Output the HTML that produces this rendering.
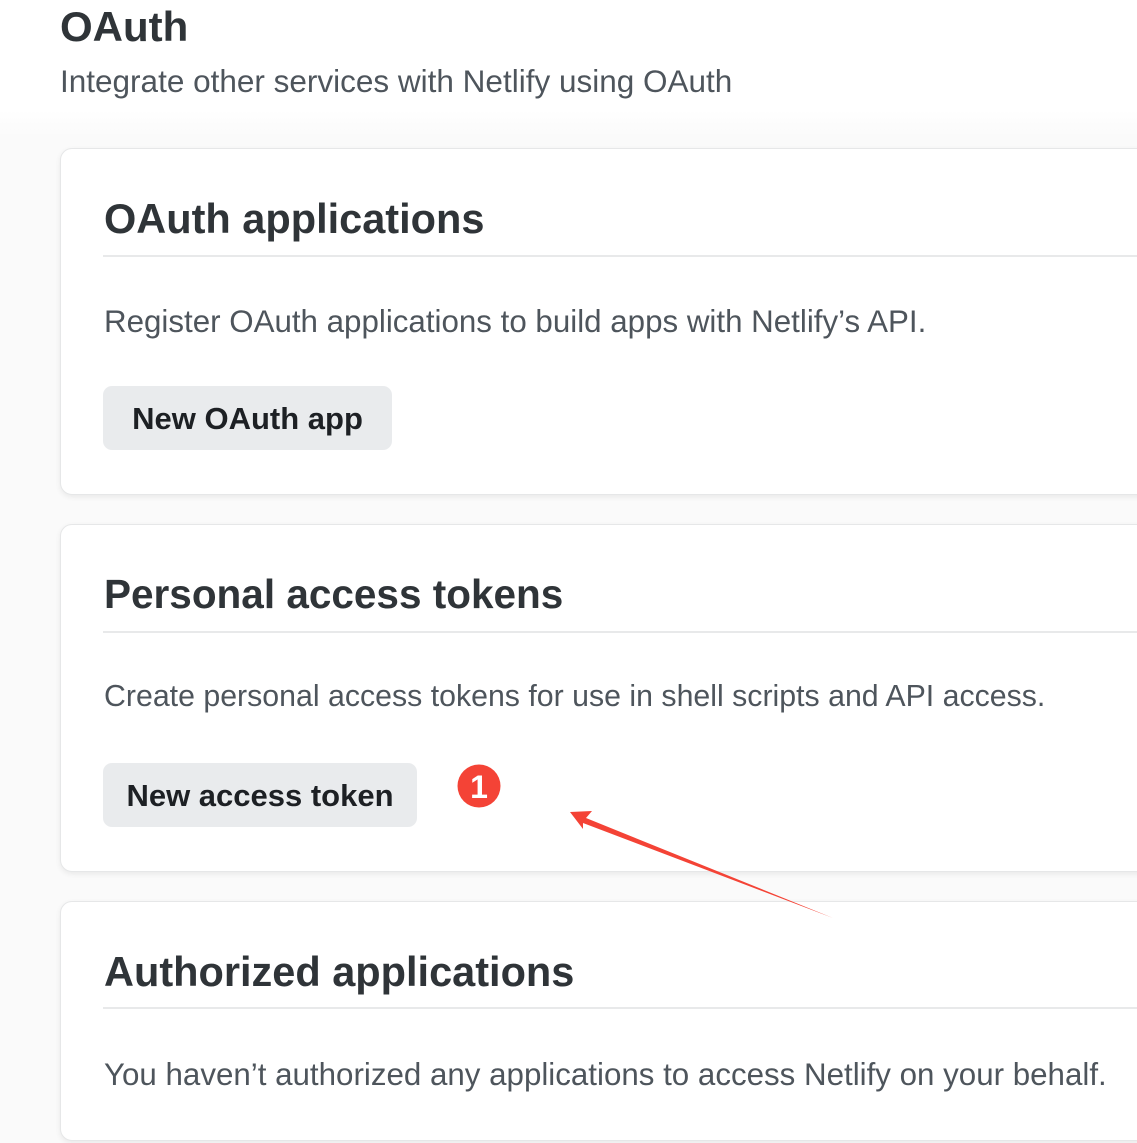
<!DOCTYPE html>
<html><head><meta charset="utf-8">
<style>
html,body{margin:0;padding:0;}
body{width:1137px;height:1143px;background:#fafafa;position:relative;overflow:hidden;font-family:"Liberation Sans",sans-serif;}
.t{position:absolute;white-space:nowrap;line-height:1;}
.title{font-size:42px;font-weight:bold;color:#2f3438;}
.sub{font-size:31.5px;color:#4e555c;}
.h{font-size:41.5px;font-weight:bold;color:#2f3438;}
.p{font-size:31.3px;color:#4e555c;}
.card{position:absolute;left:60px;width:1120px;background:#fff;border:1px solid #e6e7e8;border-radius:12px;box-shadow:0 2px 6px rgba(0,0,0,0.07);}
.line{position:absolute;left:103px;width:1040px;height:2px;background:#e8e9ea;}
.btn{position:absolute;left:103px;height:64px;background:#e9ebed;border-radius:9px;font-size:31px;font-weight:bold;color:#1d2024;text-align:center;line-height:66px;}
.top{position:absolute;left:0;top:0;width:1137px;height:138px;background:linear-gradient(#fff 0,#fff 110px,#fafafa 138px);}
</style></head><body>
<div class="top"></div>
<div class="t title" style="left:60px;top:6px">OAuth</div>
<div class="t sub" style="left:60px;top:66px">Integrate other services with Netlify using OAuth</div>

<div class="card" style="top:148px;height:345px"></div>
<div class="t h" style="left:104px;top:198px">OAuth applications</div>
<div class="line" style="top:255px"></div>
<div class="t p" style="left:104px;top:306px">Register OAuth applications to build apps with Netlify’s API.</div>
<div class="btn" style="top:386px;width:289px">New OAuth app</div>

<div class="card" style="top:524px;height:346px"></div>
<div class="t h" style="left:104px;top:574px;font-size:40.5px">Personal access tokens</div>
<div class="line" style="top:631px"></div>
<div class="t p" style="left:104px;top:682px;font-size:30.3px">Create personal access tokens for use in shell scripts and API access.</div>
<div class="btn" style="top:763px;width:314px">New access token</div>

<div class="card" style="top:901px;height:238px"></div>
<div class="t h" style="left:104px;top:951px">Authorized applications</div>
<div class="line" style="top:1007px"></div>
<div class="t p" style="left:104px;top:1059px">You haven’t authorized any applications to access Netlify on your behalf.</div>

<svg style="position:absolute;left:0;top:0" width="1137" height="1143">
<circle cx="479" cy="786" r="21.5" fill="#f44336"/>
<text x="479" y="798" font-family="Liberation Sans" font-size="32" font-weight="bold" fill="#fff" text-anchor="middle">1</text>
<polygon points="570,812 592,811 586,818 833,918 583,823 583,829" fill="#f44336"/>
</svg>
</body></html>
